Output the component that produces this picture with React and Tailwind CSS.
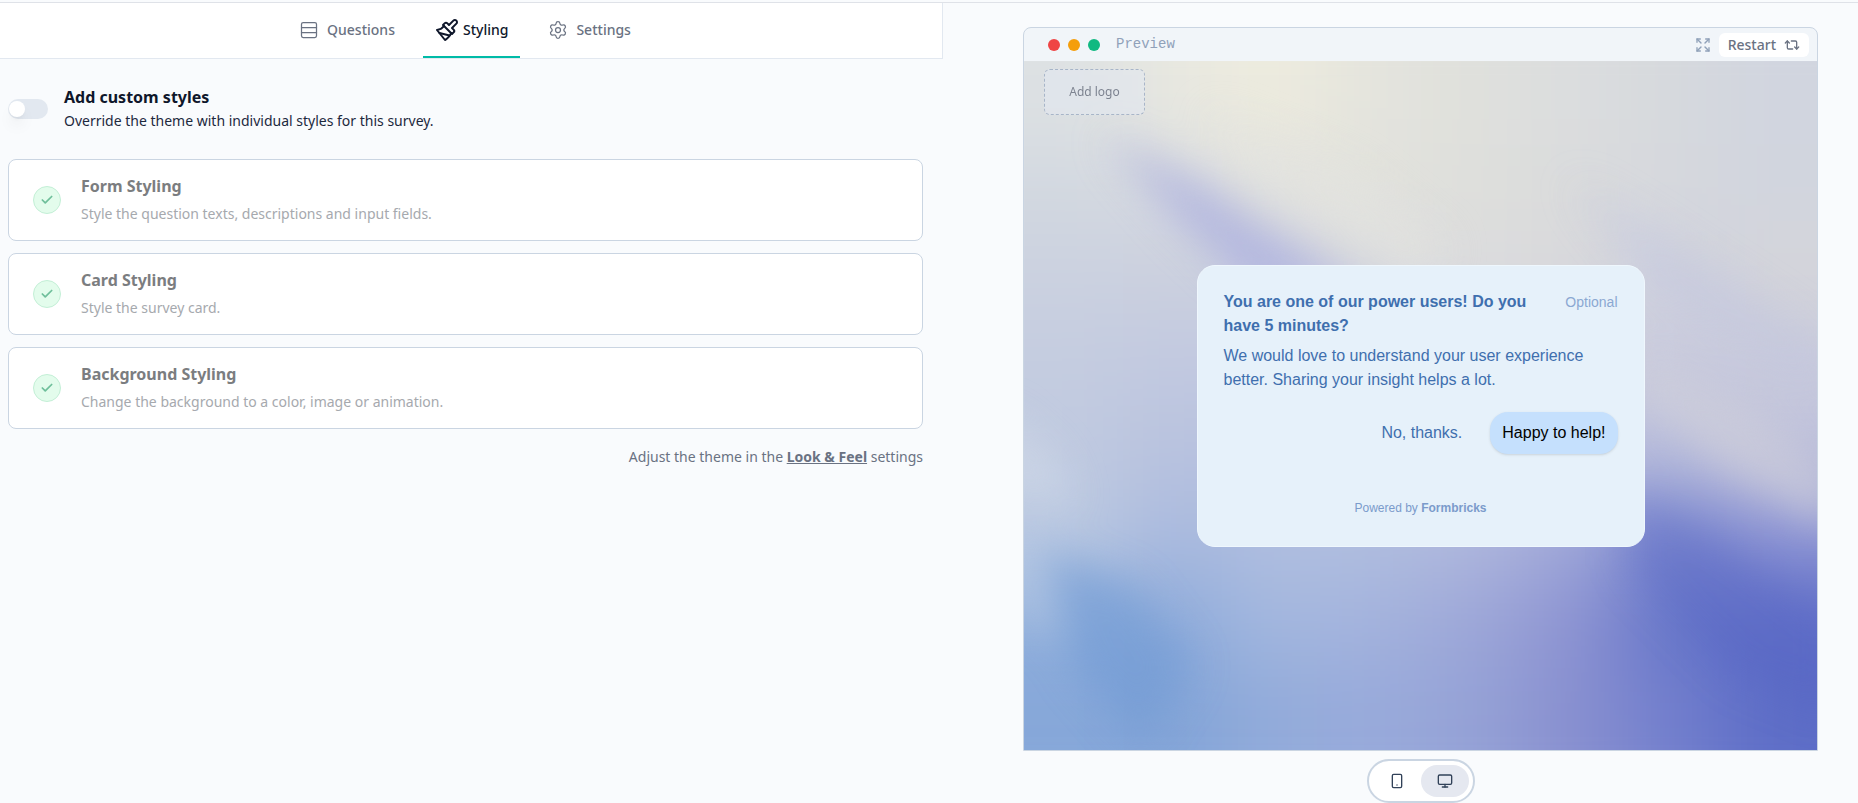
import React, { useState } from 'react';
import { Check, Expand, Monitor, Repeat2, Rows3, Settings, Smartphone } from 'lucide-react';

const BrushIcon = ({ size, strokeWidth }) => (
  <svg width={size} height={size} viewBox="0 0 24 24" fill="none" stroke="currentColor" strokeWidth={strokeWidth} strokeLinecap="round" strokeLinejoin="round" aria-hidden="true">
    <path d="M18.37 2.63 14 7l-1.59-1.59a2 2 0 0 0-2.82 0L8 7l9 9 1.59-1.59a2 2 0 0 0 0-2.82L17 10l4.37-4.37a2.12 2.12 0 1 0-3-3Z" />
    <path d="M9 8c-2 3-4 3.5-7 4l8 10c2-1 6-5 6-7" />
    <path d="M14.5 17.5 4.5 15" />
  </svg>
);

const tabs = [
  { id: 'questions', label: 'Questions', icon: Rows3 },
  { id: 'styling', label: 'Styling', icon: BrushIcon },
  { id: 'settings', label: 'Settings', icon: Settings },
];

const sections = [
  { title: 'Form Styling', description: 'Style the question texts, descriptions and input fields.' },
  { title: 'Card Styling', description: 'Style the survey card.' },
  { title: 'Background Styling', description: 'Change the background to a color, image or animation.' },
];

// Colour cells of the wallpaper, blurred together into one surface
const wallpaper = [
  ['#dde1e3', '#e8e8e0', '#eeecde', '#e4e4dd', '#dfe0dc', '#dbddde', '#d6d9dd', '#d1d5df'],
  ['#d2d8e0', '#d6d9e0', '#e0e1df', '#e2e2dc', '#dedfdc', '#dadbdc', '#d6d8dd', '#d1d5de'],
  ['#cbd1e0', '#cbd0df', '#cccfe0', '#d6d8df', '#dcdcdd', '#d8d8dc', '#cfd1dd', '#d5d5da'],
  ['#c4cce0', '#c2c9e0', '#c0c8e0', '#c6cce0', '#ccd0e0', '#d0d0dc', '#c8cade', '#c8cadc'],
  ['#c0cae0', '#b8c2df', '#b8c2df', '#b8c2df', '#bcc4e0', '#c0c4dc', '#b8bcdc', '#c0c2dc'],
  ['#bccae2', '#a9b9de', '#b0bedf', '#b0bedf', '#b0b8dd', '#a0a8d9', '#7c89d0', '#8d94d4'],
  ['#90afdc', '#8dabdb', '#a4b8df', '#a4b3dd', '#9da7d8', '#8e94d2', '#6474c9', '#5f6ec8'],
  ['#86a7d9', '#82a4d8', '#92abda', '#98aadb', '#95a2d6', '#8990d0', '#7480cd', '#5d6dc7'],
];

const Wallpaper = () => {
  const cells = [];
  for (let row = -1; row <= 8; row++) {
    for (let col = -1; col <= 8; col++) {
      const fill = wallpaper[Math.min(7, Math.max(0, row))][Math.min(7, Math.max(0, col))];
      cells.push(<rect key={`${row}-${col}`} x={col * 100} y={row * 87} width="101" height="88" fill={fill} />);
    }
  }
  return (
    <svg className="absolute inset-0 h-full w-full" viewBox="0 0 800 696" preserveAspectRatio="none" aria-hidden="true">
      <defs>
        <filter id="mesh" x="-20%" y="-20%" width="140%" height="140%" colorInterpolationFilters="sRGB">
          <feGaussianBlur stdDeviation="42" />
        </filter>
        <filter id="streak" x="-50%" y="-50%" width="200%" height="200%" colorInterpolationFilters="sRGB">
          <feGaussianBlur stdDeviation="20" />
        </filter>
      </defs>
      <g filter="url(#mesh)">{cells}</g>
      <g filter="url(#streak)">
        <path d="M80 75 L180 125 L250 175 L350 240 L230 230 L160 165 Z" fill="#a6abde" opacity="0.7" />
        <path d="M180 50 L330 110 L430 190 L400 220 L280 150 Z" fill="#e4e4df" opacity="0.6" />
        <path d="M550 120 L640 175 L800 280 L800 330 L640 235 Z" fill="#bfc4e0" opacity="0.4" />
        <path d="M620 290 L720 340 L820 420 L820 475 L700 410 L620 340 Z" fill="#cfcfda" opacity="0.65" />
        <path d="M610 430 L700 480 L820 570 L820 660 L720 620 L610 510 Z" fill="#5262c2" opacity="0.35" />
        <path d="M-30 350 L30 400 L50 450 L-30 430 Z" fill="#d6dfea" opacity="0.45" />
        <path d="M20 495 L110 530 L170 610 L120 690 L50 610 Z" fill="#6c97d4" opacity="0.5" />
        <path d="M-20 470 L10 490 L40 590 L0 560 Z" fill="#bccde6" opacity="0.6" />
      </g>
    </svg>
  );
};

const SectionCard = ({ title, description }) => (
  <button type="button" disabled className="flex w-full items-center rounded-lg border border-slate-300 bg-white py-4 pl-6 text-left">
    <span className="flex h-7 w-7 shrink-0 items-center justify-center rounded-full border border-[#c3efd6] bg-[#e3fcec] text-[#6fbf9b]">
      <Check size={14} strokeWidth={3} />
    </span>
    <span className="ml-5 block">
      <span className="block text-base leading-5 font-bold text-[#7b7d80]">{title}</span>
      <span className="mt-2 block text-sm text-[#a6a9ae]">{description}</span>
    </span>
  </button>
);

const SurveyCard = () => (
  <div className="relative w-[448px] rounded-[18px] border border-[#eff7fd] bg-[#e6f1fa] px-[26px] py-6 font-['Liberation_Sans',Arial,sans-serif] text-[#3f6fae]">
    <div className="flex items-start justify-between">
      <h3 className="w-[320px] text-base font-bold">You are one of our power users! Do you have 5 minutes?</h3>
      <span className="text-sm leading-6 text-[#8ba8d2]">Optional</span>
    </div>
    <p className="mt-1.5 text-base">We would love to understand your user experience better. Sharing your insight helps a lot.</p>
    <div className="mt-5 flex items-center justify-end gap-4">
      <button type="button" className="px-3 py-2 text-base">No, thanks.</button>
      <button type="button" className="h-[42px] rounded-[18px] bg-[#c5e0fd] px-3 text-base text-black shadow-sm">Happy to help!</button>
    </div>
    <p className="mt-[46px] mb-1.5 text-center text-xs text-[#7b9bcb]">
      Powered by <b>Formbricks</b>
    </p>
  </div>
);

const Preview = () => {
  const [device, setDevice] = useState('desktop');

  return (
    <section className="flex flex-col items-center pt-6 pr-10 pl-20">
      <div className="flex w-full flex-1 flex-col overflow-hidden rounded-t-lg border border-slate-300 bg-slate-100">
        <div className="flex h-[33px] items-center pr-2 pl-6">
          <div className="flex gap-2">
            <span className="h-3 w-3 rounded-full bg-[#ef4444]" />
            <span className="h-3 w-3 rounded-full bg-[#f59e0b]" />
            <span className="h-3 w-3 rounded-full bg-[#10b981]" />
          </div>
          <p className="ml-4 flex-1 pb-0.5 font-['Liberation_Mono',monospace] text-sm text-slate-400">Preview</p>
          <button type="button" aria-label="Expand preview" className="text-slate-400">
            <Expand size={16} />
          </button>
          <button type="button" className="ml-2 flex h-6 items-center gap-2 rounded-md bg-white px-[9px] text-sm font-medium text-gray-500">
            Restart
            <Repeat2 size={16} />
          </button>
        </div>
        <div className="relative flex flex-1 items-center justify-center">
          <Wallpaper />
          <button type="button" className="absolute top-2 left-5 h-[46px] w-[101px] rounded-md border border-dashed border-slate-400/70 bg-slate-200/60 text-xs text-[#7d8390]">
            Add logo
          </button>
          <SurveyCard />
        </div>
      </div>
      <div className="mt-2 flex h-11 items-center rounded-full border-2 border-slate-300 bg-white p-1 text-slate-700">
        <button
          type="button"
          aria-label="Mobile"
          onClick={() => setDevice('mobile')}
          className={`flex h-8 w-12 items-center justify-center rounded-full ${device === 'mobile' ? 'bg-[#e5e8f0]' : ''}`}
        >
          <Smartphone size={16} />
        </button>
        <button
          type="button"
          aria-label="Desktop"
          onClick={() => setDevice('desktop')}
          className={`flex h-8 w-12 items-center justify-center rounded-full ${device === 'desktop' ? 'bg-[#e5e8f0]' : ''}`}
        >
          <Monitor size={16} />
        </button>
      </div>
    </section>
  );
};

const App = () => {
  const [activeTab, setActiveTab] = useState('styling');
  const [custom, setCustom] = useState(false);

  return (
    <div className="flex min-h-screen flex-col bg-[#f9fbfd] pt-0.5 font-['Noto_Sans',sans-serif] text-slate-900">
      <div className="grid flex-1 grid-cols-[943fr_915fr] border-t border-[#dfe2e8]">
        <main>
          <nav className="flex h-14 justify-center gap-4 border-r border-b border-slate-200 bg-white pr-3">
            {tabs.map(({ id, label, icon: Icon }) => (
              <button
                key={id}
                type="button"
                onClick={() => setActiveTab(id)}
                className={`flex items-center border-b-2 px-3 text-sm font-medium ${
                  activeTab === id ? 'gap-1 border-teal-500 text-slate-900' : 'gap-2 border-transparent text-gray-500'
                }`}
              >
                <Icon size={activeTab === id ? 24 : 20} strokeWidth={activeTab === id ? 2 : 1.5} />
                {label}
              </button>
            ))}
          </nav>
          <div className="pt-6 pr-5 pl-2">
            <label className="flex items-center gap-4 py-1">
              <input type="checkbox" role="switch" checked={custom} onChange={() => setCustom(!custom)} className="peer sr-only" />
              <span className="flex h-5 w-10 items-center rounded-full bg-slate-200 p-px peer-checked:justify-end peer-checked:bg-slate-800">
                <span className="h-4 w-4 rounded-full bg-white shadow-lg" />
              </span>
              <span>
                <span className="block text-base leading-5 font-bold">Add custom styles</span>
                <span className="mt-1 block text-sm text-slate-800">Override the theme with individual styles for this survey.</span>
              </span>
            </label>
            <div className="mt-6 space-y-3">
              {sections.map((section) => (
                <SectionCard key={section.title} {...section} />
              ))}
            </div>
            <p className="mt-4 text-right text-sm leading-6 text-gray-500">
              Adjust the theme in the <a href="#look" className="font-bold underline">Look &amp; Feel</a> settings
            </p>
          </div>
        </main>
        <Preview />
      </div>
    </div>
  );
};

export default App;
